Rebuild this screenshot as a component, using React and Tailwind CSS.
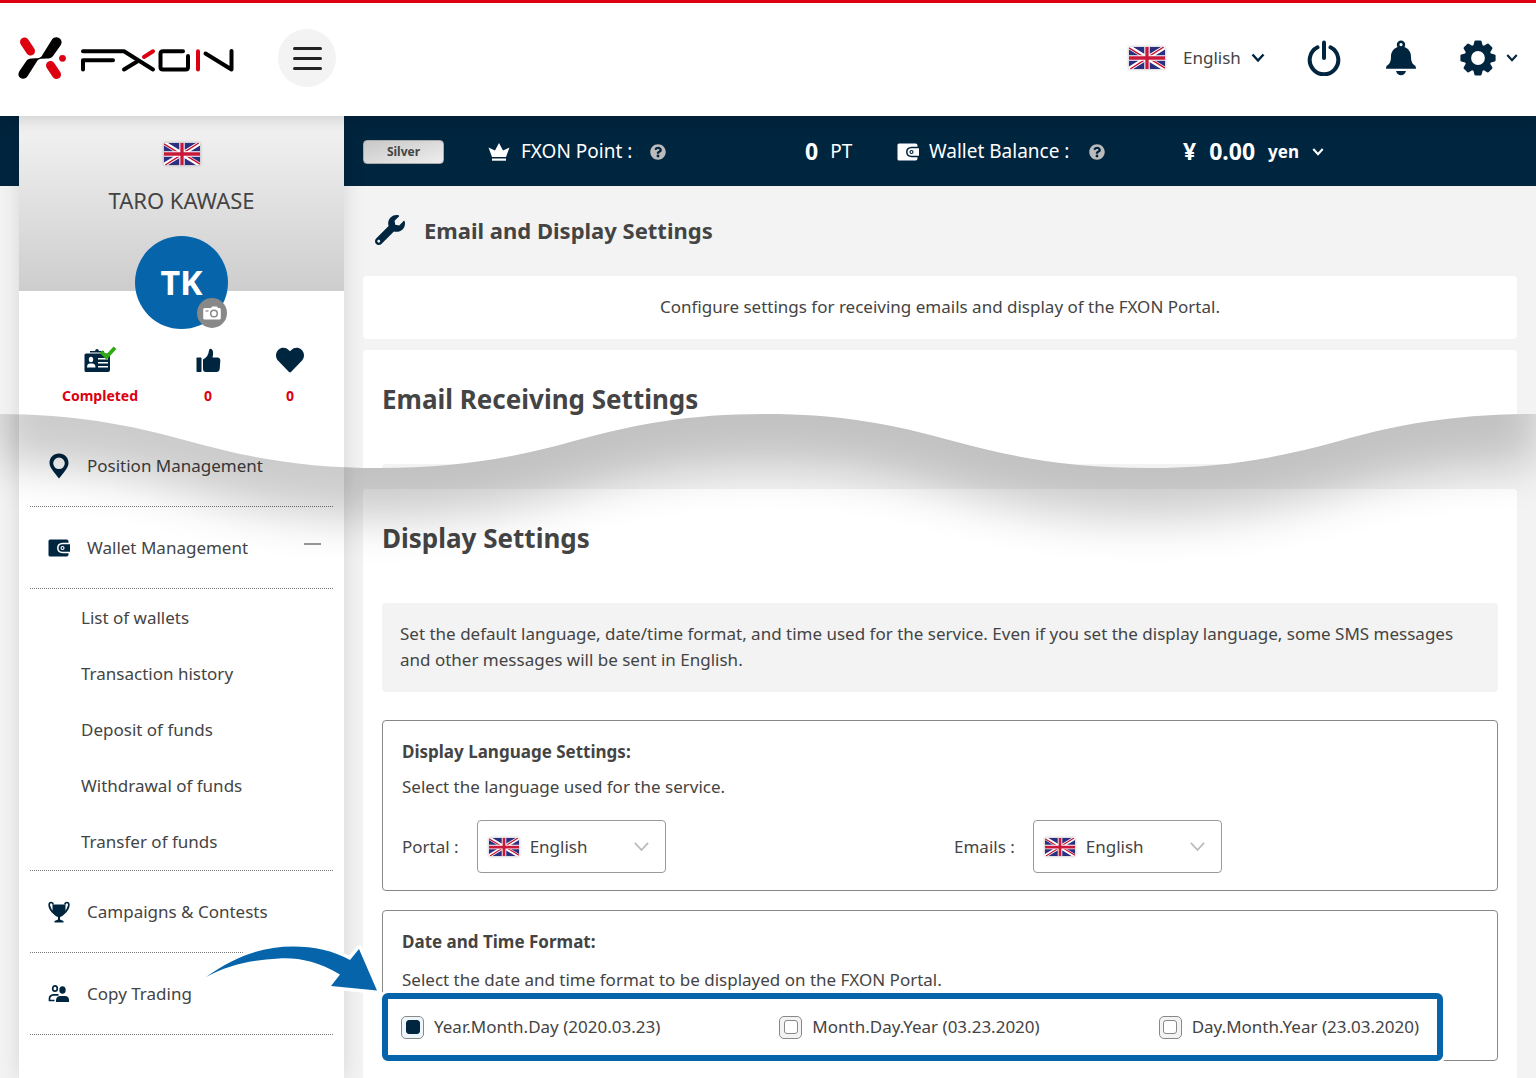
import { useState } from "react";
import { FaHeart, FaQuestionCircle, FaWrench } from "react-icons/fa";

const walletLinks = [
  "List of wallets",
  "Transaction history",
  "Deposit of funds",
  "Withdrawal of funds",
  "Transfer of funds",
];

const dateFormats = [
  { id: "ymd", label: "Year.Month.Day (2020.03.23)" },
  { id: "mdy", label: "Month.Day.Year (03.23.2020)" },
  { id: "dmy", label: "Day.Month.Year (23.03.2020)" },
];

const wave =
  "M-3 0 C72 0 127 10 188 27 C249 44 305 54 380 54 C455 54 515 44 574 27 C635 10 690 0 765 0 C840 0 892 10 953 27 C1014 44 1073 54 1148 54 C1223 54 1278 44 1339 27 C1400 10 1455 0 1539 0";

function Flag({ className }) {
  return (
    <svg viewBox="0 0 60 36" preserveAspectRatio="none" className={`shadow-[0_0_3px_rgba(0,0,0,0.3)] ${className}`} aria-hidden="true">
      <rect width="60" height="36" fill="#2b2f7f" />
      <path d="M0 0L60 36M60 0L0 36" stroke="#fff" strokeWidth="7" />
      <path d="M0 1.5L25 16.500M60 34.500L35 19.500M58 0L34 15M2 36L26 21" stroke="#c8102e" strokeWidth="2.200" />
      <path d="M30 0V36M0 18H60" stroke="#fff" strokeWidth="9" />
      <path d="M30 0V36M0 18H60" stroke="#c8193a" strokeWidth="5.500" />
    </svg>
  );
}

function Chevron({ className, strokeWidth = 2.5 }) {
  return (
    <svg viewBox="0 0 14 10" fill="none" stroke="currentColor" strokeWidth={strokeWidth} className={className} aria-hidden="true">
      <path d="M1.500 1.500L7 7.500L12.500 1.500" />
    </svg>
  );
}

function Logo() {
  return (
    <svg viewBox="0 0 220 46" className="h-[46px] w-[220px]" fill="none" strokeLinecap="round" aria-label="FXON" role="img">
      <path d="M7.500 7L13.500 16" stroke="#dc0010" strokeWidth="9" />
      <path d="M33.500 30.500L39.500 39.500" stroke="#dc0010" strokeWidth="9" />
      <circle cx="45.500" cy="23.300" r="3.400" fill="#dc0010" />
      <path
        d="M35 4.500C36.800 1.800 40 1.500 42.500 3.200C45 5 45.300 8 43.500 10.500L36 21C34.500 23 32.500 23.600 30 23.600L24 23.800C22 24 21 24.800 20 26.300L11 40.500C9.200 43.500 6 44.700 3.500 43C1 41.300 1 38.500 2.500 36L9 26.500C10.500 24.200 12 23.500 14.500 23.500L19 23.300C23 23.300 24.500 22 26 19Z"
        fill="#000"
      />
      <g stroke="#000" strokeWidth="4" strokeLinejoin="round">
        <path d="M66 16.300H107L136 34.500" />
        <path d="M66 34.500V25.300H96" />
        <path d="M107 34.500L121 26" />
        <path d="M166 16.300H146Q143.500 16.300 143.500 18.800V32Q143.500 34.500 146 34.500H168.500Q171 34.500 171 32V21" />
        <path d="M188.500 18.500L214.500 34.500V16" />
      </g>
      <path d="M127 22L136 16.300M181 16.300V34.500" stroke="#dc0010" strokeWidth="4" />
    </svg>
  );
}

function PowerIcon() {
  return (
    <svg viewBox="0 0 34 36" className="h-9 w-[34px]" fill="none" stroke="#00253f" strokeWidth="4" strokeLinecap="round">
      <path d="M10.500 7.300A14.300 14.300 0 1 0 23.500 7.300" />
      <path d="M17 2.500V18" />
    </svg>
  );
}

function BellIcon() {
  return (
    <svg viewBox="0 0 30 36" className="h-9 w-[30px]" fill="#00253f">
      <path
        fillRule="evenodd"
        d="M15 0.500A4.200 4.200 0 0 1 19.200 4.700Q19.200 6 18.500 7C22.500 8.500 25 12 25 16.500C25 22 26.500 24 29 25.500Q30 26.500 30 28.800H0Q0 26.500 1 25.500C3.500 24 5 22 5 16.500C5 12 7.500 8.500 11.500 7Q10.800 6 10.800 4.700A4.200 4.200 0 0 1 15 0.500ZM15 3A1.600 1.600 0 1 0 15 6.200A1.600 1.600 0 1 0 15 3Z"
      />
      <path d="M10 31H20Q18.500 35.300 15 35.300Q11.500 35.300 10 31Z" />
    </svg>
  );
}

function GearIcon() {
  return (
    <svg viewBox="-18 -18 36 36" className="size-9" fill="#00253f">
      <circle r="10.200" fill="none" stroke="#00253f" strokeWidth="6.600" />
      {[0, 45, 90, 135, 180, 225, 270, 315].map((a) => (
        <path key={a} transform={`rotate(${a})`} d="M-5 -11L-3.600 -16.600Q-3.300 -17.600 -2.300 -17.600H2.300Q3.300 -17.600 3.600 -16.600L5 -11Z" />
      ))}
    </svg>
  );
}

function CrownIcon() {
  return (
    <svg viewBox="0 0 22 20" className="h-5 w-[22px]" fill="#fff" aria-hidden="true">
      <path d="M4 15L0.500 5.500L7 8.500L11 1L15 8.500L21.500 5.500L18 15Z" />
      <rect x="4" y="16.500" width="14" height="2.200" />
    </svg>
  );
}

function WalletIcon({ className, cut }) {
  return (
    <svg viewBox="0 0 22 18" className={className} fill="none" aria-hidden="true">
      <path d="M2 0.500H18.500Q20.500 0.500 20.500 2.500V15.500Q20.500 17.500 18.500 17.500H2Q0.500 17.500 0.500 16V2Q0.500 0.500 2 0.500Z" fill="currentColor" />
      <path d="M22 4.500H14.500Q9.800 4.800 9.800 9Q9.800 13.200 14.500 13.500H22" fill="currentColor" className={cut} strokeWidth="1.500" />
      <circle cx="14.500" cy="9" r="1.500" className={cut} strokeWidth="1.200" />
    </svg>
  );
}

function PinIcon() {
  return (
    <svg viewBox="0 0 20 26" className="h-[26px] w-5" fill="#00253f" aria-hidden="true">
      <path fillRule="evenodd" d="M10 0.500C15.500 0.500 19.500 4.500 19.500 10C19.500 14.500 15 19 10 25.500C5 19 0.500 14.500 0.500 10C0.500 4.500 4.500 0.500 10 0.500ZM10 4.500A5.800 5.800 0 1 0 10 16.100A5.800 5.800 0 1 0 10 4.500Z" />
    </svg>
  );
}

function TrophyIcon() {
  return (
    <svg viewBox="0 0 22 22" className="size-[22px]" fill="#00253f" aria-hidden="true">
      <path d="M5 3.500Q5 1.500 3 1.500Q1 1.500 1.200 4.500Q1.800 8.500 6 12.500M17 3.500Q17 1.500 19 1.500Q21 1.500 20.800 4.500Q20.200 8.500 16 12.500" fill="none" stroke="#00253f" strokeWidth="1.700" />
      <path d="M4.500 3.500H17.500V9Q17.500 14.500 11 16.500Q4.500 14.500 4.500 9Z" />
      <path d="M10 14H12V18.500L15.500 20V21.500H6.500V20L10 18.500Z" />
    </svg>
  );
}

function PeopleIcon() {
  return (
    <svg viewBox="0 0 22 20" className="h-5 w-[22px]" fill="none" stroke="#00253f" strokeWidth="1.700" aria-hidden="true">
      <ellipse cx="7" cy="4.500" rx="2.300" ry="2.700" />
      <path d="M10.500 10.800H5.500Q1.500 11.200 1.500 14.500V16.500H6.500" />
      <ellipse cx="14.500" cy="6" rx="3.200" ry="3.800" fill="#00253f" stroke="none" />
      <path d="M8 18V16Q8.500 12 12.500 12H17Q20.800 12 21 16V18Z" fill="#00253f" stroke="none" />
    </svg>
  );
}

function ThumbIcon() {
  return (
    <svg viewBox="0 0 25 25" className="size-[25px]" fill="#00253f" aria-hidden="true">
      <rect x="0.500" y="9.500" width="5" height="14.500" rx="0.800" />
      <path d="M7 11.500C10.500 10 12.500 6.500 13 2.500Q13.200 0.500 14.800 0.700C17 1.200 17.800 4.500 16.500 9.500H21.500Q24.500 9.800 24.300 13L23.700 21Q23.300 24 20.500 24H10Q7 24 7 21Z" />
    </svg>
  );
}

function IdCardIcon() {
  return (
    <svg viewBox="0 0 34 28" className="h-7 w-[34px]" aria-hidden="true">
      <path d="M3 7.500H25Q27 7.500 27 9.500V24Q27 26 25 26H3Q1.500 26 1.500 24.500V9Q1.500 7.500 3 7.500Z" fill="#00253f" />
      <path d="M7 6.500V5H12Q12.500 3 14 3Q15.500 3 16 5H21V6.500Z" fill="#00253f" />
      <ellipse cx="8" cy="13.500" rx="2.200" ry="2.800" fill="#fff" />
      <path d="M4 21.500Q4 17.500 7 17.500H9Q12.500 17.500 12.500 21.500Z" fill="#fff" />
      <path d="M15 12.800H25M15 16.800H25M15 20.800H25" stroke="#fff" strokeWidth="1.400" />
      <path d="M18 5.500L23.500 11L32 1.800" fill="none" stroke="#2eab14" strokeWidth="3.800" />
    </svg>
  );
}

function CameraIcon() {
  return (
    <svg viewBox="0 0 18 14" className="h-3.5 w-[18px]" aria-hidden="true">
      <path d="M1.500 2H8L9 0.500H14L15 2H16.500Q17.800 2 17.800 3.500V12Q17.800 13.500 16.500 13.500H1.500Q0.200 13.500 0.200 12V3.500Q0.200 2 1.500 2Z" fill="#fff" />
      <circle cx="11" cy="7.500" r="3.300" fill="none" stroke="#888" strokeWidth="1.500" />
      <path d="M2.500 5H5.500" stroke="#888" strokeWidth="1.200" />
    </svg>
  );
}

function Header() {
  return (
    <header className="relative z-20 flex items-center border-t-[3px] border-[#dc0010] bg-white pt-[26px] pr-[18px] pb-[29px] pl-[17px] shadow-[0_0_18px_rgba(0,0,0,0.22)]">
      <a href="#home">
        <Logo />
      </a>
      <button type="button" aria-label="Menu" className="ml-[41px] flex size-[58px] flex-col items-center justify-center gap-[7px] rounded-full bg-[#f3f3f3]">
        <span className="h-[3px] w-[29px] rounded-full bg-[#222]" />
        <span className="h-[3px] w-[29px] rounded-full bg-[#222]" />
        <span className="h-[3px] w-[29px] rounded-full bg-[#222]" />
      </button>

      <div className="ml-auto flex items-center">
        <Flag className="h-[22px] w-9" />
        <div className="relative ml-[18px] flex items-center">
          <select aria-label="Language" className="appearance-none bg-transparent pr-6">
            <option>English</option>
          </select>
          <Chevron className="pointer-events-none absolute right-0 h-2.5 w-3.5 text-[#00253f]" />
        </div>
        <button type="button" aria-label="Log out" className="ml-[42px]">
          <PowerIcon />
        </button>
        <button type="button" aria-label="Notifications" className="ml-[45px]">
          <BellIcon />
        </button>
        <button type="button" aria-label="Settings" className="ml-11 flex items-center gap-2.5 text-[#00253f]">
          <GearIcon />
          <Chevron className="h-2.5 w-3" />
        </button>
      </div>
    </header>
  );
}

function NavItem({ icon, children, open }) {
  return (
    <a href="#menu" className="flex h-[82px] items-center border-b border-dotted border-[#777]">
      <span className="ml-[18px] flex w-[22px] shrink-0 justify-center">{icon}</span>
      <span className="ml-[17px]">{children}</span>
      {open && <span className="mr-3 mb-2 ml-auto h-0.5 w-[17px] bg-[#999]" />}
    </a>
  );
}

function Sidebar() {
  return (
    <aside className="relative z-10 w-[325px] shrink-0 bg-white shadow-[0_0_20px_rgba(0,0,0,0.12)]">
      <div className="flex h-[175px] flex-col items-center bg-linear-to-b from-[#f4f4f4] to-[#cdcdcd] pt-[27px]">
        <Flag className="h-[22px] w-9 shrink-0" />
        <p className="mt-[19px] text-[22px] leading-8">TARO KAWASE</p>
        <div className="relative mt-5 flex size-[93px] shrink-0 items-center justify-center rounded-full bg-[#0564aa] text-[34px] font-bold text-white">
          TK
          <button type="button" aria-label="Change photo" className="absolute right-px bottom-px flex size-[30px] items-center justify-center rounded-full bg-[#888]">
            <CameraIcon />
          </button>
        </div>
      </div>

      <ul className="mt-[55px] flex text-sm leading-5 font-bold text-[#dc0010]">
        <li className="ml-9 flex w-[90px] flex-col items-center gap-3">
          <IdCardIcon />
          Completed
        </li>
        <li className="ml-9 flex w-[54px] flex-col items-center gap-3">
          <span className="flex h-7 items-center">
            <ThumbIcon />
          </span>
          0
        </li>
        <li className="ml-7 flex w-[54px] flex-col items-center gap-3">
          <span className="flex h-7 items-center">
            <FaHeart className="size-7 text-[#00253f]" />
          </span>
          0
        </li>
      </ul>

      <nav className="mx-[11px] mt-[19px]">
        <NavItem icon={<PinIcon />}>Position Management</NavItem>
        <NavItem icon={<WalletIcon className="h-[18px] w-[22px] text-[#00253f]" cut="stroke-white" />} open>
          Wallet Management
        </NavItem>
        <ul className="border-b border-dotted border-[#777] pt-px pl-[51px]">
          {walletLinks.map((link) => (
            <li key={link}>
              <a href="#wallet" className="flex h-14 items-center">
                {link}
              </a>
            </li>
          ))}
        </ul>
        <NavItem icon={<TrophyIcon />}>Campaigns &amp; Contests</NavItem>
        <NavItem icon={<PeopleIcon />}>Copy Trading</NavItem>
      </nav>
    </aside>
  );
}

function BalanceBar() {
  return (
    <div className="flex h-[70px] items-center bg-[#00253f] pt-px pl-[19px] text-[19px] text-white">
      <span className="flex h-6 w-[81px] items-center justify-center rounded-sm border border-[#aaa] bg-linear-to-br from-[#c8c8c8] to-[#eee] text-xs font-bold text-[#444]">
        Silver
      </span>
      <div className="ml-11 flex w-[317px] items-center">
        <CrownIcon />
        <span className="ml-[11px]">FXON Point :</span>
        <FaQuestionCircle className="ml-[18px] size-4 text-[#bbb]" />
      </div>
      <div className="flex w-[92px] items-center gap-3">
        <b className="text-[23px]">0</b>
        <span>PT</span>
      </div>
      <div className="flex w-[286px] items-center">
        <WalletIcon className="h-[18px] w-[22px]" cut="stroke-[#00253f]" />
        <span className="ml-2.5">Wallet Balance :</span>
        <FaQuestionCircle className="ml-5 size-4 text-[#bbb]" />
      </div>
      <button type="button" className="flex items-center gap-[13px] font-bold">
        <span className="text-[23px]">¥</span>
        <span className="text-[23px]">0.00</span>
        <span className="text-[17px]">yen</span>
        <Chevron className="h-2.5 w-3" />
      </button>
    </div>
  );
}

function LanguageSelect({ id, label }) {
  return (
    <div className="flex items-center gap-[18px]">
      <label htmlFor={id}>{label} :</label>
      <div className="relative flex items-center">
        <Flag className="pointer-events-none absolute left-3 h-[18px] w-[30px]" />
        <select id={id} className="h-[53px] w-[189px] appearance-none rounded border border-[#999] bg-transparent pl-[52px]">
          <option>English</option>
        </select>
        <Chevron strokeWidth={1.5} className="pointer-events-none absolute right-4 h-3 w-[17px] text-[#bbb]" />
      </div>
    </div>
  );
}

function DateFormatOptions() {
  const [format, setFormat] = useState("ymd");
  return (
    <div className="relative -mb-px -ml-5 mr-[35px] flex h-[68px] items-center justify-between rounded-md border-[6px] border-[#0564aa] bg-white pr-[18px] pl-[13px] shadow-[0_0_0_3px_#fff]">
      {dateFormats.map(({ id, label }) => (
        <label key={id} className="flex items-center gap-2.5">
          <input
            type="radio"
            name="date-format"
            checked={format === id}
            onChange={() => setFormat(id)}
            className="flex size-[23px] appearance-none items-center justify-center rounded-[5px] border border-[#888] bg-[#f3f3f3] before:size-[14px] before:rounded-[3px] before:border before:border-[#888] before:bg-white checked:bg-[#eef6fc] checked:before:border-[#00253f] checked:before:bg-[#00253f]"
          />
          {label}
        </label>
      ))}
      {/* Pointer from the side menu */}
      <svg viewBox="0 0 190 60" className="absolute -top-[65px] -left-[187px] z-20 h-[60px] w-[190px]" fill="#0564aa" aria-hidden="true">
        <path
          d="M5 43C34 22 62 12.500 92 12.500C113 12.500 132 16.500 149 26L158 15L176 56.500L130 52L139 40.500C116 27 97 23.500 78 24.500C50 26 27 31 5 43Z"
          stroke="#fff"
          strokeWidth="7"
          strokeLinejoin="round"
          paintOrder="stroke"
        />
      </svg>
    </div>
  );
}

// Torn edge between the two halves of the page
function WaveBreak() {
  return (
    <svg viewBox="0 0 1536 180" preserveAspectRatio="none" className="pointer-events-none absolute top-[414px] left-0 z-10 h-[180px] w-full" aria-hidden="true">
      <defs>
        <clipPath id="below-wave">
          <path d={`${wave} V180 H-3 Z`} />
        </clipPath>
        <filter id="soft" x="-10%" y="-60%" width="120%" height="220%">
          <feGaussianBlur stdDeviation="23" />
        </filter>
      </defs>
      <g clipPath="url(#below-wave)">
        <rect x="363" y="0" width="1173" height="75" fill="#f3f3f3" />
        <path d={`${wave} V-160 H-3 Z`} transform="translate(0 50)" fill="#000" opacity="0.2" filter="url(#soft)" />
      </g>
    </svg>
  );
}

export default function App() {
  return (
    <div className="relative flex min-h-screen flex-col overflow-hidden bg-[#f3f3f3] font-['Noto_Sans','Open_Sans',sans-serif] text-[17px] text-[#444]">
      <Header />
      <div className="flex flex-1">
        <div className="h-[70px] w-[19px] shrink-0 bg-[#00253f]" />
        <Sidebar />
        <main className="flex min-w-0 flex-1 flex-col">
          <BalanceBar />
          <div className="flex flex-1 flex-col px-[19px]">
            <div className="flex h-[90px] items-center pb-0.5 pl-3">
              <FaWrench className="size-[30px] text-[#00253f]" />
              <h1 className="ml-[19px] text-[22px] font-bold">Email and Display Settings</h1>
            </div>
            <p className="rounded bg-white pt-[17px] pb-[19px] text-center leading-[27px]">
              Configure settings for receiving emails and display of the FXON Portal.
            </p>

            <section className="mt-[11px] rounded bg-white px-[19px] pt-8">
              <h2 className="text-[26px] leading-[34px] font-bold">Email Receiving Settings</h2>
              <div className="mt-12 h-[14px] rounded-t bg-[#f3f3f3]" />
            </section>

            <section className="mt-[11px] flex-1 rounded-t bg-white px-[19px] pt-8 pb-4">
              <h2 className="text-[26px] leading-[34px] font-bold">Display Settings</h2>
              <p className="mt-12 rounded bg-[#f3f3f3] px-[18px] pt-[18px] pb-[19px] leading-[26px]">
                Set the default language, date/time format, and time used for the service. Even if you set the display
                language, some SMS messages and other messages will be sent in English.
              </p>

              <div className="mt-7 rounded border border-[#888] px-[19px] pt-[18px] pb-[17px] leading-[26px]">
                <h3 className="font-bold">Display Language Settings:</h3>
                <p className="mt-[9px]">Select the language used for the service.</p>
                <div className="mt-5 grid grid-cols-2 gap-7">
                  <LanguageSelect id="portal-language" label="Portal" />
                  <LanguageSelect id="emails-language" label="Emails" />
                </div>
              </div>

              <div className="mt-[19px] rounded border border-[#888] px-[19px] pt-[18px] leading-[26px]">
                <h3 className="font-bold">Date and Time Format:</h3>
                <p className="mt-3">Select the date and time format to be displayed on the FXON Portal.</p>
                <DateFormatOptions />
              </div>
            </section>
          </div>
        </main>
      </div>
      <WaveBreak />
    </div>
  );
}
